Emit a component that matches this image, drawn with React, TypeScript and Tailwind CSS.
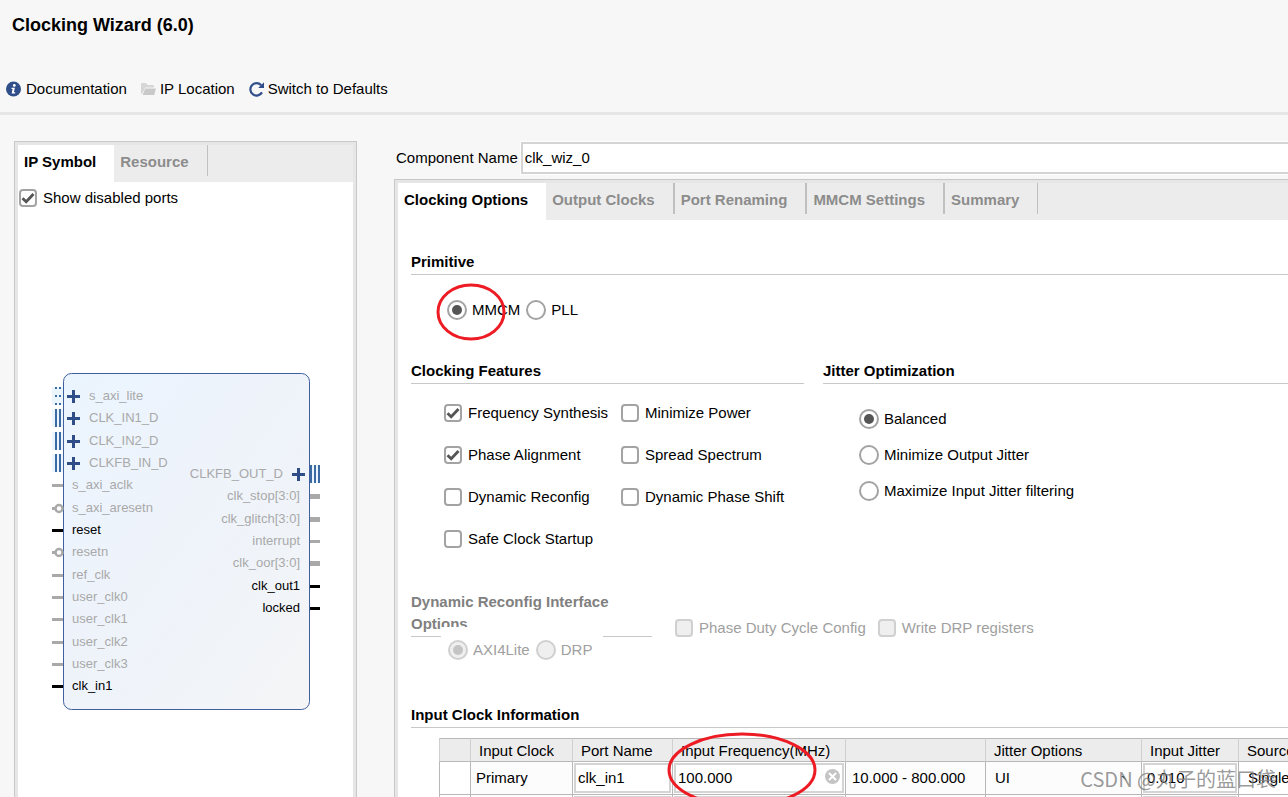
import type { ReactNode } from "react";
import clsx from "clsx";

type Port = {
  name: string;
  kind: "dots" | "bus" | "wire" | "wide" | "inverted";
  active?: boolean;
};

const INPUTS: Port[] = [
  { name: "s_axi_lite", kind: "dots" },
  { name: "CLK_IN1_D", kind: "bus" },
  { name: "CLK_IN2_D", kind: "bus" },
  { name: "CLKFB_IN_D", kind: "bus" },
  { name: "s_axi_aclk", kind: "wire" },
  { name: "s_axi_aresetn", kind: "inverted" },
  { name: "reset", kind: "wire", active: true },
  { name: "resetn", kind: "inverted" },
  { name: "ref_clk", kind: "wire" },
  { name: "user_clk0", kind: "wire" },
  { name: "user_clk1", kind: "wire" },
  { name: "user_clk2", kind: "wire" },
  { name: "user_clk3", kind: "wire" },
  { name: "clk_in1", kind: "wire", active: true },
];

const OUTPUTS: Port[] = [
  { name: "CLKFB_OUT_D", kind: "bus" },
  { name: "clk_stop[3:0]", kind: "wide" },
  { name: "clk_glitch[3:0]", kind: "wide" },
  { name: "interrupt", kind: "wire" },
  { name: "clk_oor[3:0]", kind: "wide" },
  { name: "clk_out1", kind: "wire", active: true },
  { name: "locked", kind: "wire", active: true },
];

const PITCH = 22.33;

function Plus({ x, y }: { x: number; y: number }) {
  return <path d={`M${x - 6} ${y + 0.5}h13M${x + 0.5} ${y - 6}v13`} stroke="#2f4d86" strokeWidth="3" />;
}

function InputPort({ port, y }: { port: Port; y: number }) {
  const color = port.active ? "#000" : "#a9a9a9";
  const isInterface = port.kind === "bus" || port.kind === "dots";
  return (
    <g>
      {isInterface && (
        <>
          <rect x="0" y={y - 9} width="11" height="18" fill="#ebf5fe" />
          <path
            d={`M4 ${y - 9}v18M8 ${y - 9}v18`}
            stroke="#3c6ba3"
            strokeWidth="2"
            strokeDasharray={port.kind === "dots" ? "2 6" : undefined}
          />
          <Plus x={21} y={y} />
        </>
      )}
      {port.kind === "wire" && <rect x="0" y={y - 1} width="11" height="3" fill={color} />}
      {port.kind === "inverted" && (
        <>
          <rect x="0" y={y - 1} width="4" height="3" fill={color} />
          <circle cx="7" cy={y + 0.5} r="3.5" fill="#fff" stroke={color} strokeWidth="2.5" />
        </>
      )}
      <text x={isInterface ? 37 : 20} y={y + 4} fill={color}>{port.name}</text>
    </g>
  );
}

function OutputPort({ port, y }: { port: Port; y: number }) {
  const color = port.active ? "#000" : "#a9a9a9";
  return (
    <g>
      {port.kind === "bus" && (
        <>
          <rect x="258" y={y - 9} width="10" height="18" fill="#ebf5fe" />
          <path d={`M259 ${y - 9}v18M263 ${y - 9}v18M267 ${y - 9}v18`} stroke="#3c6ba3" strokeWidth="2" />
          <Plus x={246} y={y} />
        </>
      )}
      {port.kind === "wire" && <rect x="258" y={y - 1} width="10" height="3" fill={color} />}
      {port.kind === "wide" && <rect x="258" y={y - 2} width="10" height="5" fill={color} />}
      <text x={port.kind === "bus" ? 231 : 248} y={y + 4} textAnchor="end" fill={color}>{port.name}</text>
    </g>
  );
}

function IpSymbol() {
  return (
    <svg width="269" height="338" viewBox="0 0 269 338" className="text-[13px]" role="img" aria-label="IP symbol">
      <defs>
        <linearGradient id="block" x1="0" y1="0" x2="1" y2="1">
          <stop offset="0" stopColor="#ebf5fe" />
          <stop offset="0.4" stopColor="#eef3fb" />
          <stop offset="0.7" stopColor="#f0f4f9" />
          <stop offset="1" stopColor="#f5f5f6" />
        </linearGradient>
      </defs>
      <rect x="11.5" y="0.5" width="246" height="336" rx="8" fill="url(#block)" stroke="#3f5f9e" />
      {INPUTS.map((port, i) => <InputPort key={port.name} port={port} y={Math.round(23 + i * PITCH)} />)}
      {OUTPUTS.map((port, i) => <OutputPort key={port.name} port={port} y={Math.round(101 + i * PITCH)} />)}
    </svg>
  );
}

function InfoIcon() {
  return (
    <svg width="16" height="16" viewBox="0 0 16 16" aria-hidden="true">
      <circle cx="7.5" cy="8" r="7.5" fill="#304e8a" />
      <circle cx="8.3" cy="4.4" r="1.4" fill="#fff" />
      <path d="M5.5 6.8h3.4l-1 4.4h1.3v1.2H5.6l1-4.4H5.5z" fill="#fff" />
    </svg>
  );
}

function FolderIcon() {
  return (
    <svg width="16" height="16" viewBox="0 0 16 16" aria-hidden="true">
      <path d="M0 13V3q0-1 1-1h4l1.5 2H12q1 0 1 1v1.5H4.2L1.6 12z" fill="#d6d6d6" />
      <path d="M4.2 7.5H15L13.2 14H1.6z" fill="#c9c9c9" />
    </svg>
  );
}

function RefreshIcon() {
  return (
    <svg width="16" height="16" viewBox="0 0 16 16" aria-hidden="true">
      <path d="M12.2 4.2A6.2 6.2 0 1 0 13 11.4" fill="none" stroke="#304e8a" strokeWidth="2.2" />
      <path d="M15 1.2V7H9.2z" fill="#304e8a" />
    </svg>
  );
}

function Checkbox({ label, checked, disabled }: { label: string; checked?: boolean; disabled?: boolean }) {
  return (
    <label className={clsx("flex items-center gap-1.5 whitespace-nowrap", disabled && "text-[#a0a0a0]")}>
      <span className="relative size-[18px] shrink-0">
        <input
          type="checkbox"
          defaultChecked={checked}
          disabled={disabled}
          className="peer block size-[18px] appearance-none rounded border-2 border-[#a3a3a3] bg-white disabled:border-[#d0d0d0] disabled:bg-[#efefef]"
        />
        <svg viewBox="0 0 18 18" className="pointer-events-none absolute inset-0 hidden peer-checked:block" aria-hidden="true">
          <path d="M3.5 9.2 7.2 12.8 14.5 5" fill="none" stroke="#555" strokeWidth="2.8" />
        </svg>
      </span>
      {label}
    </label>
  );
}

function Radio({ name, label, checked, disabled }: { name: string; label: string; checked?: boolean; disabled?: boolean }) {
  return (
    <label className={clsx("flex items-center gap-[5px] whitespace-nowrap", disabled && "text-[#a0a0a0]")}>
      <input
        type="radio"
        name={name}
        defaultChecked={checked}
        disabled={disabled}
        className="grid size-5 shrink-0 appearance-none place-content-center rounded-full border-2 border-[#a3a3a3] bg-white before:size-2.5 before:rounded-full checked:before:bg-[#555] disabled:border-[#d0d0d0] disabled:bg-[#efefef] disabled:checked:before:bg-[#c4c4c4]"
      />
      {label}
    </label>
  );
}

function Heading({ children }: { children: ReactNode }) {
  return <h2 className="border-b border-[#c8c8c8] pb-0.5 font-bold">{children}</h2>;
}

function Tab({ label, selected, last }: { label: string; selected?: boolean; last?: boolean }) {
  if (selected) {
    return (
      <button role="tab" aria-selected="true" className="h-[37px] bg-white pr-[18px] pb-1 pl-1.5 font-bold whitespace-nowrap">
        {label}
      </button>
    );
  }
  return (
    <button
      role="tab"
      aria-selected="false"
      className={clsx(
        "h-[31px] border-[#c0c0c0] pt-[3px] pr-[18px] pl-1.5 font-bold whitespace-nowrap text-[#8c8c8c]",
        last ? "border-r" : "border-r-2",
      )}
    >
      {label}
    </button>
  );
}

function Panel({ children }: { children: ReactNode }) {
  return (
    <div className="flex-1 border-t border-l border-[#c8c8c8]">
      <div className="h-full border-t-3 border-l-3 border-[#e6e6e6] bg-white">{children}</div>
    </div>
  );
}

const FIELD = "block h-[30px] w-full border-2 border-[#d4d4d4] bg-white px-0.5 pb-0.5";

function ClockRow({ clock, port, freq, range, jitter, source }: Record<"clock" | "port" | "freq" | "range" | "jitter" | "source", string>) {
  return (
    <tr className="h-[33px] *:border-b *:border-l *:border-[#b8b8b8] *:p-0">
      <td />
      <td className="bg-[#fcfcfc]"><span className="pl-[5px]">{clock}</span></td>
      <td><div className="px-px"><input className={FIELD} defaultValue={port} aria-label={`${clock} port name`} /></div></td>
      <td>
        <div className="relative px-px">
          <input className={FIELD} defaultValue={freq} aria-label={`${clock} input frequency`} />
          <button className="absolute top-1.5 right-[5px]" aria-label="Clear">
            <svg width="15" height="15" viewBox="0 0 15 15">
              <circle cx="7.5" cy="7.5" r="7.5" fill="#c4c4c4" />
              <path d="m4 4 7 7m0-7-7 7" stroke="#fff" strokeWidth="2" />
            </svg>
          </button>
        </div>
      </td>
      <td className="bg-[#fcfcfc]"><span className="pl-1.5">{range}</span></td>
      <td className="bg-[#fcfcfc]">
        <div className="relative">
          <select className="block h-7 w-full appearance-none pl-[9px]" aria-label={`${clock} jitter options`}>
            <option>UI</option>
            <option>PS</option>
          </select>
          <svg width="6" height="5" viewBox="0 0 6 5" className="pointer-events-none absolute top-3 right-3.5" aria-hidden="true">
            <path d="M0 0h3l3 5z" fill="#333" />
          </svg>
        </div>
      </td>
      <td><div className="px-px"><input className={FIELD} defaultValue={jitter} aria-label={`${clock} input jitter`} /></div></td>
      <td>
        <select className="block h-7 w-full appearance-none pl-[9px]" aria-label={`${clock} source`}>
          <option>{source}</option>
        </select>
      </td>
    </tr>
  );
}

function ClockTable() {
  return (
    <div className="relative mt-2.5 ml-7">
      <table className="w-[899px] table-fixed border-separate border-spacing-0">
        <colgroup>
          <col className="w-[31px]" />
          <col className="w-[102px]" />
          <col className="w-[100px]" />
          <col className="w-[173px]" />
          <col className="w-[140px]" />
          <col className="w-[156px]" />
          <col className="w-[97px]" />
          <col className="w-[100px]" />
        </colgroup>
        <thead>
          <tr className="h-6 bg-[#ececec] text-left *:border-t *:border-b *:border-l *:border-t-[#b8b8b8] *:border-b-[#b8b8b8] *:border-l-[#d0d0d0] *:py-0 *:pt-0.5 *:pr-0 *:pl-2 *:font-normal *:whitespace-nowrap">
            <th />
            <th>Input Clock</th>
            <th>Port Name</th>
            <th>Input Frequency(MHz)</th>
            <th />
            <th>Jitter Options</th>
            <th>Input Jitter</th>
            <th>Source</th>
          </tr>
        </thead>
        <tbody>
          <ClockRow clock="Primary" port="clk_in1" freq="100.000" range="10.000 - 800.000" jitter="0.010" source="Single ended" />
          {/* second row only peeks in at the bottom of the window */}
          <tr className="h-[33px] *:border-b *:border-l *:border-[#b8b8b8] *:p-0">
            <td />
            <td className="bg-[#fcfcfc]" />
            <td><div className="px-px"><input className={FIELD} disabled aria-label="Secondary port name" /></div></td>
            <td><div className="px-px"><input className={FIELD} disabled aria-label="Secondary input frequency" /></div></td>
            <td className="bg-[#fcfcfc]" />
            <td className="bg-[#fcfcfc]" />
            <td><div className="px-px"><input className={FIELD} disabled aria-label="Secondary input jitter" /></div></td>
            <td />
          </tr>
        </tbody>
      </table>
      <svg width="152" height="76" viewBox="0 0 152 76" className="pointer-events-none absolute -top-1.5 left-[228px]" aria-hidden="true">
        <ellipse cx="75" cy="38" rx="73" ry="36" fill="none" stroke="#ed1c24" strokeWidth="3" />
      </svg>
    </div>
  );
}

export default function App() {
  return (
    <div className="relative flex h-screen flex-col overflow-hidden bg-[#f7f7f7] font-['Liberation_Sans',Arial,sans-serif] text-[15px] leading-5 text-black">
      <header className="border-b-3 border-[#e6e6e6] pt-[15px] pb-[13px]">
        <h1 className="px-3 text-lg leading-5 font-bold">Clocking Wizard (6.0)</h1>
        <div className="mt-11 flex gap-3.5 px-1.5">
          <button className="flex items-center gap-1"><InfoIcon />Documentation</button>
          <button className="flex items-center gap-[3px]"><FolderIcon />IP Location</button>
          <button className="flex items-center gap-[3px]"><RefreshIcon />Switch to Defaults</button>
        </div>
      </header>

      <main className="flex min-h-0 flex-1 pt-[26px] pl-3.5">
        <aside className="flex w-[343px] shrink-0 border-r border-[#c8c8c8]">
          <Panel>
            <div className="h-full border-r-3 border-[#e6e6e6]">
              <div role="tablist" className="flex items-start bg-[#ececec]">
                <Tab label="IP Symbol" selected />
                <Tab label="Resource" last />
              </div>
              <div className="flex flex-col px-px pt-1.5">
                <Checkbox label="Show disabled ports" checked />
                <div className="mt-[165px] flex justify-center pl-0.5"><IpSymbol /></div>
              </div>
            </div>
          </Panel>
        </aside>

        <section className="ml-[37px] flex min-w-0 flex-1 flex-col pt-px">
          <div className="flex items-center">
            <label htmlFor="component" className="pl-0.5 whitespace-nowrap">Component Name</label>
            <input
              id="component"
              defaultValue="clk_wiz_0"
              className="ml-[3px] h-8 min-w-0 flex-1 border-2 border-r-0 border-[#d4d4d4] bg-white px-0.5 pb-0.5 outline outline-white"
            />
          </div>
          <div className="mt-[5px] flex flex-1">
            <Panel>
              <div role="tablist" className="flex items-start bg-[#ececec]">
                <Tab label="Clocking Options" selected />
                <Tab label="Output Clocks" />
                <Tab label="Port Renaming" />
                <Tab label="MMCM Settings" />
                <Tab label="Summary" last />
              </div>
              <div className="pt-8 pl-[13px]">
                <Heading>Primitive</Heading>
                <div className="relative mt-[25px] flex gap-1.5 pl-9">
                  <Radio name="primitive" label="MMCM" checked />
                  <Radio name="primitive" label="PLL" />
                  <svg width="72" height="58" viewBox="0 0 72 58" className="pointer-events-none absolute -top-[17px] left-6" aria-hidden="true">
                    <ellipse cx="36" cy="29" rx="33" ry="27" fill="none" stroke="#ed1c24" strokeWidth="3" />
                  </svg>
                </div>

                <div className="mt-[41px] flex gap-[19px]">
                  <section className="w-[393px] shrink-0">
                    <Heading>Clocking Features</Heading>
                    <div className="mt-[19px] grid grid-cols-[177px_auto] gap-y-[22px] pl-[33px]">
                      <Checkbox label="Frequency Synthesis" checked />
                      <Checkbox label="Minimize Power" />
                      <Checkbox label="Phase Alignment" checked />
                      <Checkbox label="Spread Spectrum" />
                      <Checkbox label="Dynamic Reconfig" />
                      <Checkbox label="Dynamic Phase Shift" />
                      <Checkbox label="Safe Clock Startup" />
                    </div>
                  </section>
                  <section className="min-w-0 flex-1">
                    <Heading>Jitter Optimization</Heading>
                    <div className="mt-[25px] flex flex-col gap-4 pl-9">
                      <Radio name="jitter" label="Balanced" checked />
                      <Radio name="jitter" label="Minimize Output Jitter" />
                      <Radio name="jitter" label="Maximize Input Jitter filtering" />
                    </div>
                  </section>
                </div>

                <div className="mt-[42px] flex items-start">
                  <div className="w-[241px] shrink-0">
                    <h2 className="border-b border-[#c8c8c8] pr-10 pb-px leading-[22px] font-bold text-[#808080]">
                      Dynamic Reconfig Interface Options
                    </h2>
                    <div className="relative -mt-2.5 ml-[30px] flex w-[162px] gap-1.5 bg-white pt-[13px] pl-[7px]">
                      <Radio name="drp" label="AXI4Lite" checked disabled />
                      <Radio name="drp" label="DRP" disabled />
                    </div>
                  </div>
                  <div className="mt-[27px] ml-[23px] flex gap-3">
                    <Checkbox label="Phase Duty Cycle Config" disabled />
                    <Checkbox label="Write DRP registers" disabled />
                  </div>
                </div>

                <div className="mt-[45px]">
                  <Heading>Input Clock Information</Heading>
                  <ClockTable />
                </div>
              </div>
            </Panel>
          </div>
        </section>
      </main>

      <p className="pointer-events-none absolute right-3 bottom-2 font-['Noto_Sans_CJK_SC',sans-serif] text-xl leading-5 text-[#808080]/80">
        CSDN @丸子的蓝口袋
      </p>
    </div>
  );
}
